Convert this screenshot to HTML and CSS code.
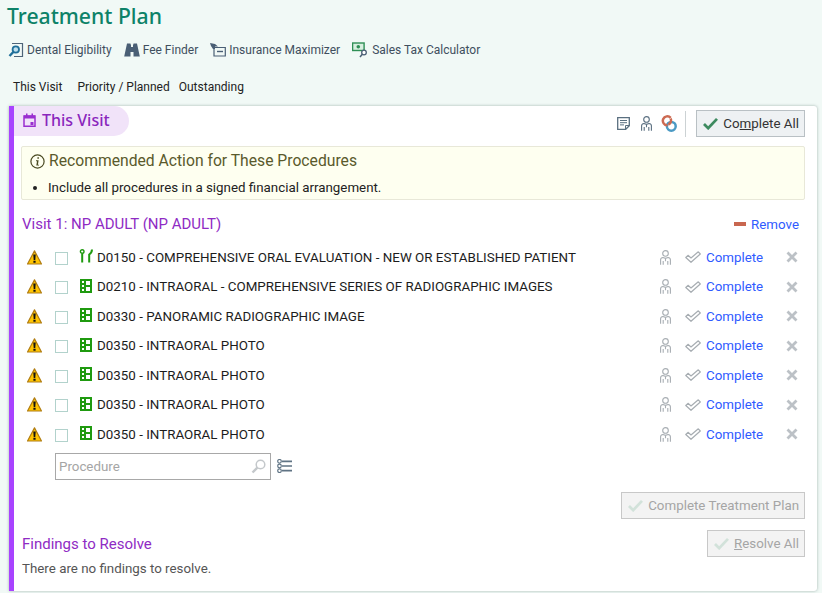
FILE: index.html
```html
<!DOCTYPE html>
<html lang="en">
<head>
  <meta charset="UTF-8">
  <title>Treatment Plan</title>
  <link rel="stylesheet" href="styles.css">
</head>
<body>
  <svg class="defs" width="0" height="0">
    <symbol id="warn" viewBox="0 0 15 15">
      <path d="M7.500.9 14.500 14H.5Z" fill="#ffc400" stroke="#b07c12" stroke-width="1.200" stroke-linejoin="round"/>
      <path d="M6.300 4.500h2.400l-.4 5.500H6.700ZM6.400 10.800h2.200v2H6.400Z" fill="#111"/>
    </symbol>
    <symbol id="film" viewBox="0 0 12 14">
      <path d="M0 0h12v14H0Z" fill="#1f9a0f"/>
      <path d="M2 2h2v2H2ZM2 6h2v2H2ZM2 10h2v2H2ZM6 2h4v4H6ZM6 8h4v4H6Z" fill="#fff"/>
    </symbol>
    <symbol id="person" viewBox="0 0 11 15">
      <g fill="none" stroke="currentColor" stroke-width="1.100">
        <circle cx="5.500" cy="3.400" r="2.800"/>
        <path d="M.6 14.800V9.800Q.6 7.900 3 7.500L5.500 8.300 8 7.500Q10.400 7.900 10.400 9.800V14.800M3.200 11v3.800M7.800 11v3.800M5.500 8.300v3"/>
      </g>
    </symbol>
    <symbol id="dblcheck" viewBox="0 0 16 12">
      <path d="M.8 6.500 3 4.300 6 7 13.300.8 15.300 3 6 11.300Z" fill="none" stroke="#a7adb2" stroke-width="1.200" stroke-linejoin="round"/>
    </symbol>
    <symbol id="cross" viewBox="0 0 12 12">
      <path d="M1.500 1.500l9 9M10.500 1.500l-9 9" stroke="#bcc1c6" stroke-width="2.800" fill="none"/>
    </symbol>
    <symbol id="tick" viewBox="0 0 16 14">
      <path d="M1 7.500l4.500 4.500L15 2" fill="none" stroke="currentColor" stroke-width="3"/>
    </symbol>
  </svg>

  <header class="page-head">
    <h1>Treatment Plan</h1>
    <nav class="tools">
      <a href="#">
        <svg width="16" height="16" viewBox="0 0 16 16"><path d="M4 1.500h10.500v13H6" fill="none" stroke="#4d6478" stroke-width="1.200"/><circle cx="7.800" cy="7.500" r="3.200" fill="#bfe0ee" stroke="#1f6f99" stroke-width="1.800"/><path d="M5.300 10 1.500 14" stroke="#1f6f99" stroke-width="2.400"/></svg>
        Dental Eligibility
      </a>
      <a href="#">
        <svg width="16" height="16" viewBox="0 0 16 16"><path d="M3 1.500h3.500v1H7v2.500h2V2.500h.5v-1H13L15.800 14.500H9.500V10H6.500V14.500H.2Z" fill="#4a5f75"/></svg>
        Fee Finder
      </a>
      <a href="#">
        <svg width="16" height="14" viewBox="0 0 16 14"><path d="M0 0l5 1 3 2.500H5V6H3L1 3Z" fill="#4a5f75"/><path d="M4 4.500h11.300v8.500H4V6" fill="none" stroke="#4a5f75" stroke-width="1.200"/><path d="M7 8.500h6" stroke="#4a5f75" stroke-width="1.400"/></svg>
        Insurance Maximizer
      </a>
      <a href="#">
        <svg width="17" height="16" viewBox="0 0 17 16"><rect x=".6" y="1" width="11.500" height="7.500" fill="#d8efe0" stroke="#2f8f55" stroke-width="1.400"/><circle cx="6.300" cy="4.700" r="1.800" fill="#2f8f55"/><circle cx="12" cy="10.500" r="2.300" fill="#fff" stroke="#4a5f75" stroke-width="1.300"/><path d="M10.300 12.300 8 15" stroke="#4a5f75" stroke-width="1.500"/></svg>
        Sales Tax Calculator
      </a>
    </nav>
    <nav class="tabs">
      <a href="#">This Visit</a>
      <a href="#">Priority / Planned</a>
      <a href="#">Outstanding</a>
    </nav>
  </header>

  <main class="card">
    <div class="card-top">
      <h2 class="pill">
        <svg width="13" height="14" viewBox="0 0 13 14"><path d="M1 3h11v10.200H1Z" fill="none" stroke="#9a2fd0" stroke-width="1.500"/><path d="M1 2.500h11v3H1ZM3 .5h1.500v3H3ZM8.500.5H10v3H8.500ZM7.500 9H10.500v3H7.500Z" fill="#9a2fd0"/></svg>
        This Visit
      </h2>
      <div class="card-actions">
        <svg class="note-icon" width="13" height="13" viewBox="0 0 13 13"><path d="M.7.7h11.600v8l-3.600 3.600H.7Z" fill="none" stroke="#5a6f80" stroke-width="1.300"/><path d="M3 3.500h7M3 5.700h7M3 7.900h4" stroke="#5a6f80"/><path d="M8.500 12V8.500H12" fill="none" stroke="#5a6f80"/></svg>
        <svg class="head-person" width="11" height="15"><use href="#person"/></svg>
        <svg width="17" height="17" viewBox="0 0 17 17"><g fill="none" stroke-width="2.500"><circle cx="11.300" cy="11.300" r="4.400" stroke="#4b9ac4"/><path d="M7.500 10.300A4.500 4.500 0 1 1 10.700 2.800" stroke="#cc6a52"/><path d="M10.700 3.500A4.500 4.500 0 0 1 8.300 9.500" stroke="#cc6a52"/></g></svg>
        <span class="sep"></span>
        <button class="btn btn-main"><svg width="15" height="13"><use href="#tick"/></svg><span>Co<u>m</u>plete All</span></button>
      </div>
    </div>

    <section class="notice">
      <h3>
        <svg width="15" height="15" viewBox="0 0 15 15"><circle cx="7.500" cy="7.500" r="6.600" fill="none" stroke="#4a4a22" stroke-width="1.200"/><path d="M7.400 3.300h1.500v1.500H7.400ZM6 6.300h2.600L7.900 10.700H9v.9H6.300l.7-4.400H6Z" fill="#4a4a22"/></svg>
        Recommended Action for These Procedures
      </h3>
      <ul>
        <li>Include all procedures in a signed financial arrangement.</li>
      </ul>
    </section>

    <div class="visit-head">
      <h4>Visit 1: NP ADULT (NP ADULT)</h4>
      <a class="remove" href="#"><span class="dash"></span>Remove</a>
    </div>

    <div class="rows">
      <div class="row">
        <svg class="warn" width="15" height="15"><use href="#warn"/></svg>
        <span class="check"></span>
        <svg class="proc-icon" width="14" height="14" viewBox="0 0 14 14"><circle cx="3.200" cy="2.500" r="1.800" fill="none" stroke="#1f9a0f" stroke-width="1.400"/><path d="M3.200 4.500V13.500" stroke="#1f9a0f" stroke-width="2"/><path d="M13 .5Q12.800 4 10.200 5.500V13.500" fill="none" stroke="#1f9a0f" stroke-width="2"/></svg>
        <span class="code">D0150 - COMPREHENSIVE ORAL EVALUATION - NEW OR ESTABLISHED PATIENT</span>
        <svg class="person" width="11" height="15"><use href="#person"/></svg>
        <svg class="dbl" width="16" height="12"><use href="#dblcheck"/></svg>
        <a href="#">Complete</a>
        <svg class="cross" width="12" height="12"><use href="#cross"/></svg>
      </div>
      <div class="row">
        <svg class="warn" width="15" height="15"><use href="#warn"/></svg>
        <span class="check"></span>
        <svg class="proc-icon" width="14" height="14"><use href="#film"/></svg>
        <span class="code">D0210 - INTRAORAL - COMPREHENSIVE SERIES OF RADIOGRAPHIC IMAGES</span>
        <svg class="person" width="11" height="15"><use href="#person"/></svg>
        <svg class="dbl" width="16" height="12"><use href="#dblcheck"/></svg>
        <a href="#">Complete</a>
        <svg class="cross" width="12" height="12"><use href="#cross"/></svg>
      </div>
      <div class="row">
        <svg class="warn" width="15" height="15"><use href="#warn"/></svg>
        <span class="check"></span>
        <svg class="proc-icon" width="14" height="14"><use href="#film"/></svg>
        <span class="code">D0330 - PANORAMIC RADIOGRAPHIC IMAGE</span>
        <svg class="person" width="11" height="15"><use href="#person"/></svg>
        <svg class="dbl" width="16" height="12"><use href="#dblcheck"/></svg>
        <a href="#">Complete</a>
        <svg class="cross" width="12" height="12"><use href="#cross"/></svg>
      </div>
      <div class="row">
        <svg class="warn" width="15" height="15"><use href="#warn"/></svg>
        <span class="check"></span>
        <svg class="proc-icon" width="14" height="14"><use href="#film"/></svg>
        <span class="code">D0350 - INTRAORAL PHOTO</span>
        <svg class="person" width="11" height="15"><use href="#person"/></svg>
        <svg class="dbl" width="16" height="12"><use href="#dblcheck"/></svg>
        <a href="#">Complete</a>
        <svg class="cross" width="12" height="12"><use href="#cross"/></svg>
      </div>
      <div class="row">
        <svg class="warn" width="15" height="15"><use href="#warn"/></svg>
        <span class="check"></span>
        <svg class="proc-icon" width="14" height="14"><use href="#film"/></svg>
        <span class="code">D0350 - INTRAORAL PHOTO</span>
        <svg class="person" width="11" height="15"><use href="#person"/></svg>
        <svg class="dbl" width="16" height="12"><use href="#dblcheck"/></svg>
        <a href="#">Complete</a>
        <svg class="cross" width="12" height="12"><use href="#cross"/></svg>
      </div>
      <div class="row">
        <svg class="warn" width="15" height="15"><use href="#warn"/></svg>
        <span class="check"></span>
        <svg class="proc-icon" width="14" height="14"><use href="#film"/></svg>
        <span class="code">D0350 - INTRAORAL PHOTO</span>
        <svg class="person" width="11" height="15"><use href="#person"/></svg>
        <svg class="dbl" width="16" height="12"><use href="#dblcheck"/></svg>
        <a href="#">Complete</a>
        <svg class="cross" width="12" height="12"><use href="#cross"/></svg>
      </div>
      <div class="row">
        <svg class="warn" width="15" height="15"><use href="#warn"/></svg>
        <span class="check"></span>
        <svg class="proc-icon" width="14" height="14"><use href="#film"/></svg>
        <span class="code">D0350 - INTRAORAL PHOTO</span>
        <svg class="person" width="11" height="15"><use href="#person"/></svg>
        <svg class="dbl" width="16" height="12"><use href="#dblcheck"/></svg>
        <a href="#">Complete</a>
        <svg class="cross" width="12" height="12"><use href="#cross"/></svg>
      </div>
    </div>

    <div class="search-row">
      <div class="search">
        <span>Procedure</span>
        <svg width="15" height="15" viewBox="0 0 15 15"><circle cx="9.500" cy="5.500" r="4.300" fill="none" stroke="#c4c8cb" stroke-width="1.500"/><path d="M6.300 8.700 1.500 13.500" stroke="#c4c8cb" stroke-width="2.400"/></svg>
      </div>
      <svg class="list-icon" width="15" height="14" viewBox="0 0 15 14"><g fill="none" stroke="#5f7384" stroke-width="1.200"><circle cx="2.500" cy="2.300" r="1.800"/><circle cx="2.500" cy="7" r="1.800"/><circle cx="2.500" cy="11.700" r="1.800"/></g><path d="M5 2.300h10M5 7h10M5 11.700h10" stroke="#5f7384" stroke-width="1.700"/></svg>
    </div>

    <div class="plan-row">
      <button class="btn btn-off"><svg width="15" height="13"><use href="#tick"/></svg><span>Complete Treatment Plan</span></button>
    </div>

    <div class="findings">
      <div>
        <h4>Findings to Resolve</h4>
        <p>There are no findings to resolve.</p>
      </div>
      <button class="btn btn-off"><svg width="15" height="13"><use href="#tick"/></svg><span><u>R</u>esolve All</span></button>
    </div>
  </main>
</body>
</html>
```

FILE: styles.css
```css
* {
  margin: 0;
  padding: 0;
  box-sizing: border-box;
}

html, body {
  height: 593px;
  overflow: hidden;
}

body {
  font-family: Roboto, sans-serif;
  font-size: 13.33px;
  background-color: #f1f9f6;
  color: #222;
}

a {
  text-decoration: none;
}

svg {
  display: block;
  flex: none;
}

.defs {
  position: absolute;
}

.page-head {
  padding: 2px 0 0 7px;
}

.page-head h1 {
  font-family: "Noto Sans", sans-serif;
  font-size: 21.2px;
  font-weight: 500;
  line-height: 27px;
  color: #0d8268;
}

.tools {
  display: flex;
  gap: 12px;
  margin-top: 11px;
  padding-left: 1px;
  height: 20px;
  align-items: center;
}

.tools a {
  display: flex;
  align-items: center;
  gap: 3px;
  font-size: 12px;
  color: #3f4f5e;
}

.tabs {
  display: flex;
  gap: 9px;
  margin-top: 18px;
  padding-left: 6px;
  height: 18px;
  align-items: center;
}

.tabs a {
  font-size: 12px;
  color: #222;
}

.tabs a:first-child {
  margin-right: 6px;
}

.card {
  margin: 10px 5px 0 9px;
  height: 485px;
  background: #fff;
  border-left: 5px solid #a843ff;
  border-radius: 0 3px 3px 0;
  box-shadow: 0 0 3px rgba(60, 90, 80, 0.45);
  padding-right: 12px;
}

.card-top {
  display: flex;
  justify-content: space-between;
  align-items: flex-start;
  height: 40px;
}

.pill {
  display: flex;
  align-items: center;
  gap: 6px;
  width: 115px;
  height: 30px;
  padding: 0 0 2px 9px;
  background: #f1e3f9;
  border-radius: 0 15px 15px 0;
  font-family: "Noto Sans", sans-serif;
  font-size: 16px;
  font-weight: 500;
  color: #8a26bd;
}

.card-actions {
  display: flex;
  align-items: center;
  padding-top: 4px;
}

.note-icon {
  margin-right: 11px;
}

.head-person {
  color: #5a6f80;
  margin-right: 8px;
}

.sep {
  width: 1px;
  height: 26px;
  background: #ccd2d4;
  margin: 0 10px 0 8px;
}

.btn {
  display: flex;
  align-items: center;
  gap: 5px;
  height: 27px;
  padding: 0 5px 0 6px;
  font-family: Roboto, sans-serif;
  font-size: 13.33px;
  border: 1px solid #b9c0c4;
  background: #eef1f3;
  color: #333;
}

.btn-main svg {
  color: #3d8a5f;
}

.btn-off {
  background: #f3f3f3;
  border-color: #c8c8c8;
  color: #a5a5a5;
}

.btn-off svg {
  color: #d2e2da;
}

.notice {
  margin-left: 7px;
  height: 54px;
  background: #fefff0;
  border: 1px solid #e8e8d8;
  border-radius: 2px;
  padding: 4px 8px;
}

.notice h3 {
  display: flex;
  align-items: center;
  gap: 4px;
  font-size: 15.7px;
  font-weight: 400;
  line-height: 20px;
  color: #5a5a2c;
}

.notice ul {
  margin-top: 9px;
  padding-left: 18px;
  font-size: 13.33px;
  line-height: 15px;
}

.visit-head {
  display: flex;
  justify-content: space-between;
  align-items: center;
  margin: 14px 6px 0 8px;
  height: 20px;
}

.visit-head h4,
.findings h4 {
  font-size: 15px;
  font-weight: 400;
  color: #8f2bc4;
}

.remove {
  display: flex;
  align-items: center;
  gap: 5px;
  font-size: 13.33px;
  color: #2f5bff;
}

.dash {
  width: 12px;
  height: 4px;
  background: #c8664f;
}

.rows {
  margin-top: 8.7px;
}

.row {
  display: flex;
  align-items: center;
  height: 29.5px;
  padding-left: 13px;
}

.warn {
  margin-right: 13px;
}

.check {
  width: 13px;
  height: 13px;
  border: 1px solid #b2d2cc;
  margin-right: 11px;
  margin-top: 2px;
}

.proc-icon {
  margin-right: 4px;
  margin-top: -2px;
}

.code {
  flex: 1;
  font-size: 13.38px;
  color: #1c1c1c;
}

.person {
  color: #a7adb2;
  margin-right: 14px;
}

.dbl {
  margin-right: 5px;
}

.row a {
  font-size: 13.33px;
  color: #2f5bff;
  width: 57px;
  margin-right: 23px;
}

.cross {
  margin-right: 7px;
}

.search-row {
  display: flex;
  align-items: center;
  gap: 6px;
  margin: 3.8px 0 0 41px;
}

.search {
  display: flex;
  align-items: center;
  justify-content: space-between;
  width: 216px;
  height: 27px;
  border: 1px solid #a8a8a8;
  padding: 0 4px 0 3px;
  font-size: 13.33px;
  color: #a5a5a5;
}

.plan-row {
  display: flex;
  justify-content: flex-end;
  margin-top: 12px;
}

.findings {
  display: flex;
  justify-content: space-between;
  align-items: flex-start;
  margin: 11px 0 0 8px;
}

.findings h4 {
  line-height: 17px;
  margin-top: 6px;
}

.findings p {
  margin-top: 8px;
  font-size: 13.33px;
  color: #555;
}
```
